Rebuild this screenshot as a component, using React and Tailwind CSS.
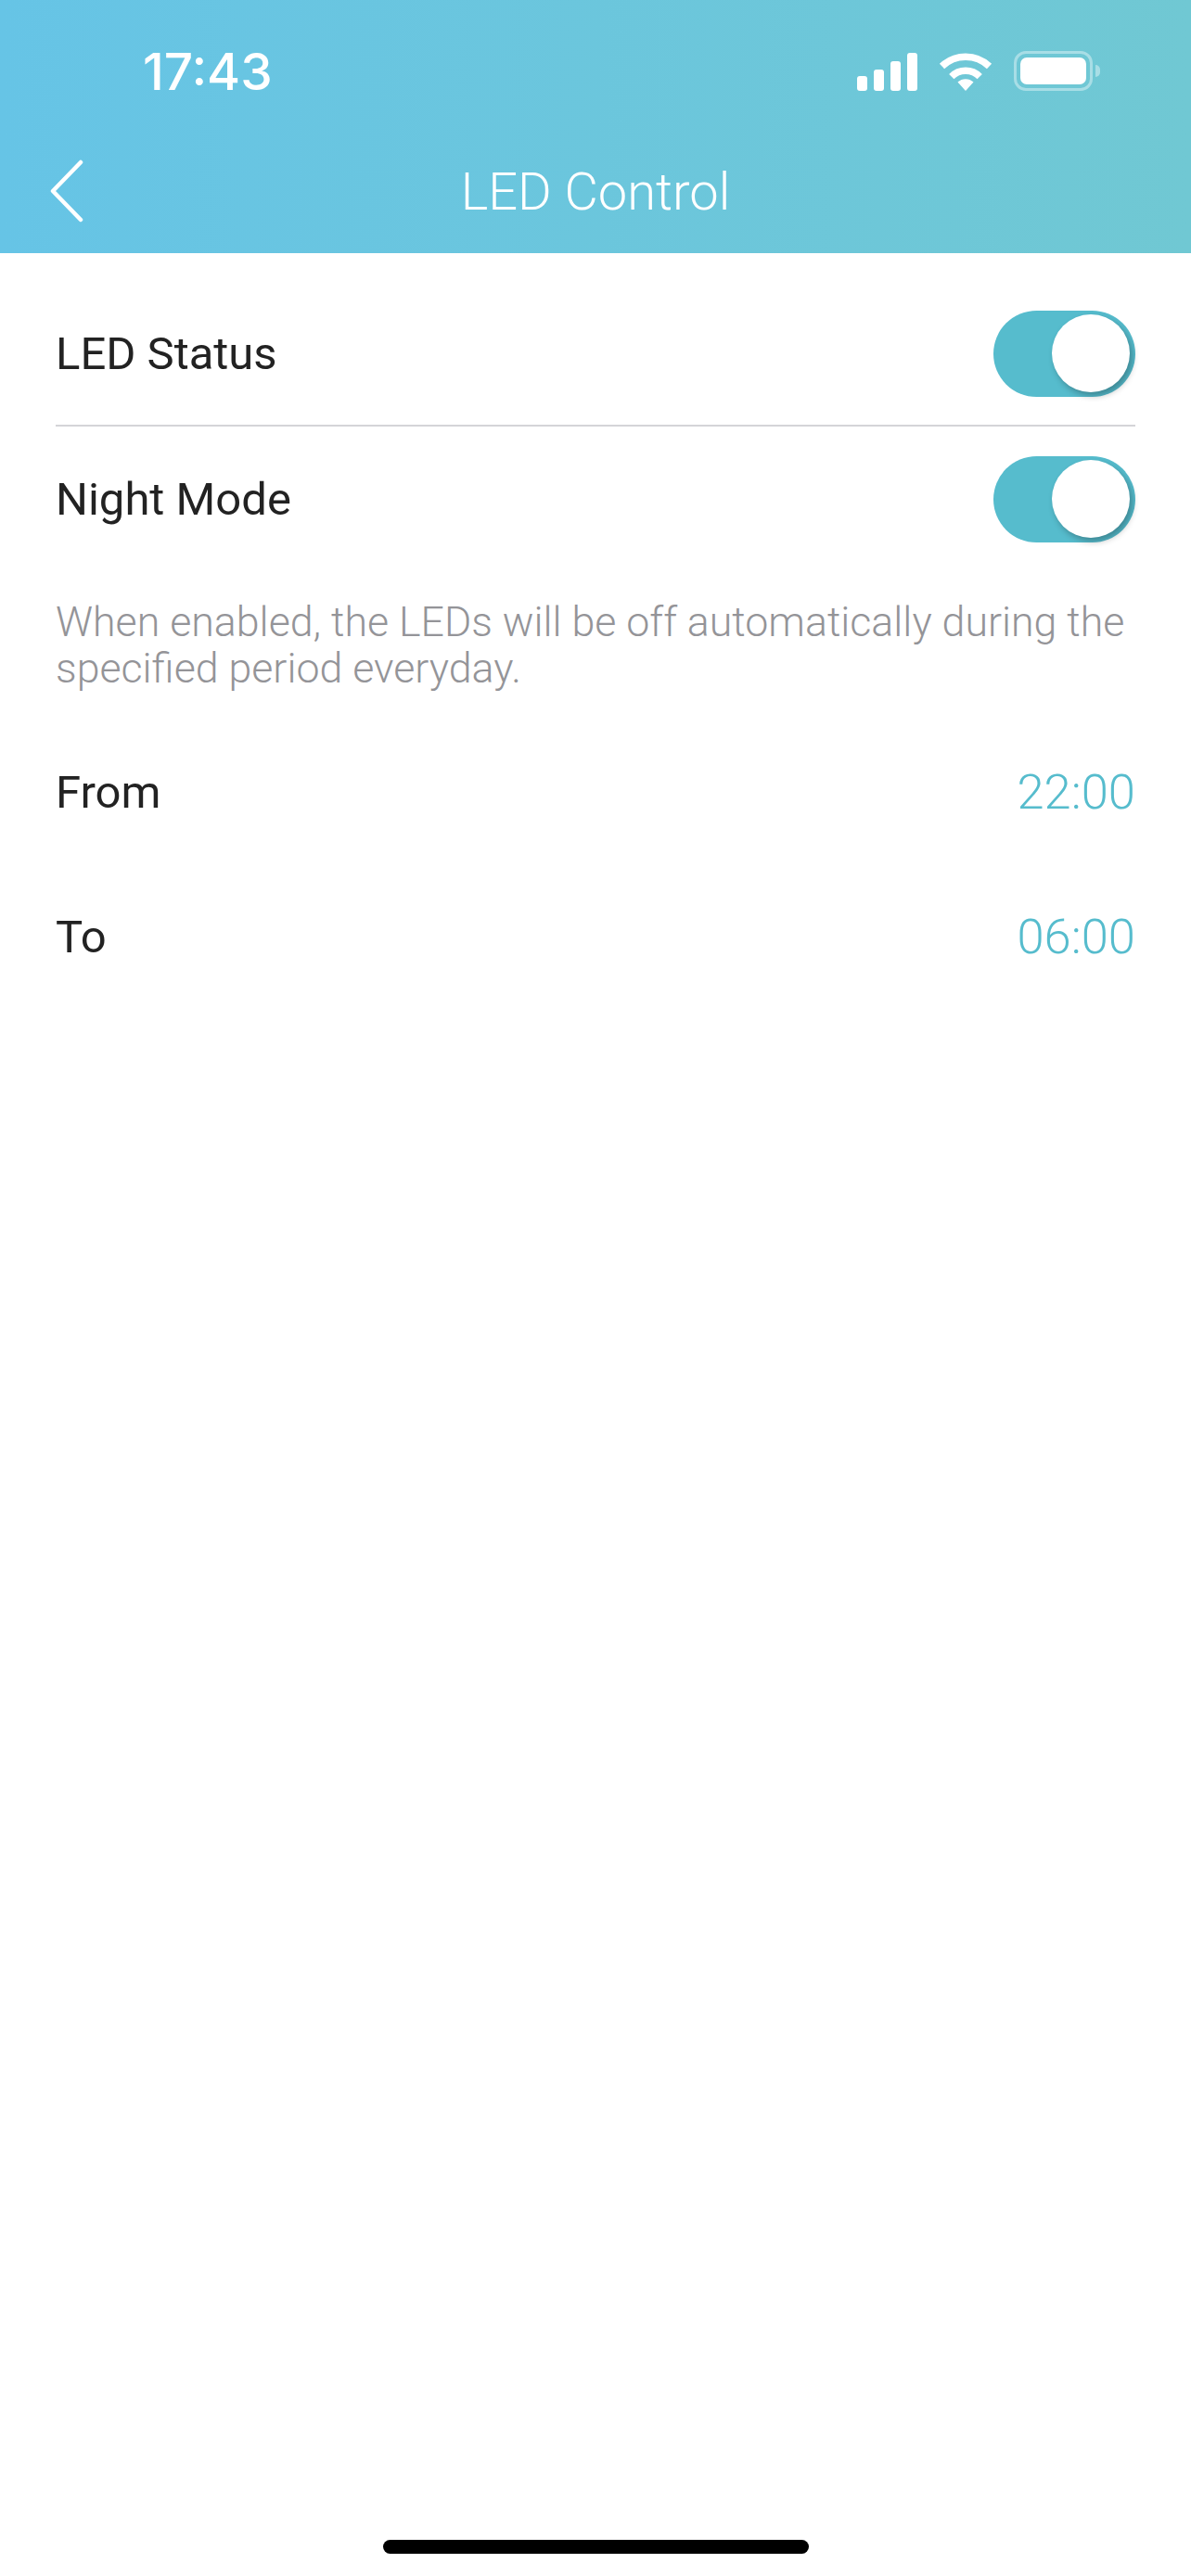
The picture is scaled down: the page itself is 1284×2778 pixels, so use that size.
import React from 'react';

const font = "font-['Roboto',sans-serif]";

const SignalIcon = () => (
    <div className="flex items-end gap-[7px]">
        <div className="w-[11px] h-[16px] rounded-[3px] bg-white" />
        <div className="w-[11px] h-[23px] rounded-[3px] bg-white" />
        <div className="w-[11px] h-[32px] rounded-[3px] bg-white" />
        <div className="w-[11px] h-[41px] rounded-[3px] bg-white" />
    </div>
);

const WifiIcon = () => (
    <svg width="58" height="42" viewBox="0 0 58 42" fill="none" className="ml-[23px]">
        <path d="M3.5 15.5A36.8 36.8 0 0 1 54.5 15.5" stroke="white" strokeWidth="7.5" />
        <path d="M13.8 26.6A21.5 21.5 0 0 1 44.2 26.6" stroke="white" strokeWidth="7.5" />
        <path d="M29 42L20.5 32.5A12.5 12.5 0 0 1 37.5 32.5Z" fill="white" />
    </svg>
);

const BatteryIcon = () => (
    <div className="flex items-center ml-[23px]">
        <div className="w-[85px] h-[43px] rounded-[13px] border-[3px] border-white/40 p-[4px]">
            <div className="w-full h-full rounded-[7px] bg-white" />
        </div>
        <div className="ml-[3px] w-[5px] h-[13px] rounded-r-full bg-white/40" />
    </div>
);

const Toggle = () => (
    <div className="flex items-center justify-end w-[153px] h-[93px] rounded-full bg-[#56bccd] pr-[6px]">
        <div className="w-[84px] h-[84px] rounded-full bg-white shadow-[3px_4px_7px_rgba(0,0,0,0.28)]" />
    </div>
);

const Row = ({ label, children, divider }) => (
    <div className={`flex items-center justify-between h-[156px] ${divider ? 'border-b-[2px] border-[#d4d4d8]' : ''}`}>
        <span className="text-[49px] pt-[1px] text-[#222222]">{label}</span>
        {children}
    </div>
);

export default function App() {
    return (
        <div className={`min-h-[2778px] bg-white flex flex-col ${font}`}>
            <header className="h-[273px] bg-linear-to-r from-[#66c4e6] to-[#70c8d3] text-white">
                <div className="flex items-center justify-between pt-[54px] pl-[154px] pr-[98px]">
                    <span className="font-['Inter',sans-serif] font-medium text-[55px] leading-[43px] pt-[2px]">17:43</span>
                    <div className="flex items-end">
                        <SignalIcon />
                        <WifiIcon />
                        <BatteryIcon />
                    </div>
                </div>
                <div className="grid grid-cols-[1fr_auto_1fr] items-center h-[134px] mt-[41px]">
                    <svg width="38" height="68" viewBox="0 0 38 68" fill="none" className="ml-[53px] -mt-[2px]">
                        <path d="M34 3L4 34L34 65" stroke="white" strokeWidth="4.5" strokeLinecap="round" strokeLinejoin="round" />
                    </svg>
                    <h1 className="text-[56px] font-light">LED Control</h1>
                    <div />
                </div>
            </header>

            <main className="flex-1 px-[60px] pt-[31px]">
                <Row label="LED Status" divider>
                    <Toggle />
                </Row>
                <Row label="Night Mode">
                    <Toggle />
                </Row>
                <p className="pt-[30px] pb-[30px] text-[44.7px] leading-[50px] font-light text-[#949498]">
                    When enabled, the LEDs will be off automatically during the specified period everyday.
                </p>
                <Row label="From">
                    <span className="text-[52.5px] font-light text-[#56bccd]">22:00</span>
                </Row>
                <Row label="To">
                    <span className="text-[52.5px] font-light text-[#56bccd]">06:00</span>
                </Row>
            </main>

            <div className="flex justify-center pb-[24px]">
                <div className="w-[459px] h-[15px] rounded-full bg-black" />
            </div>
        </div>
    );
}
